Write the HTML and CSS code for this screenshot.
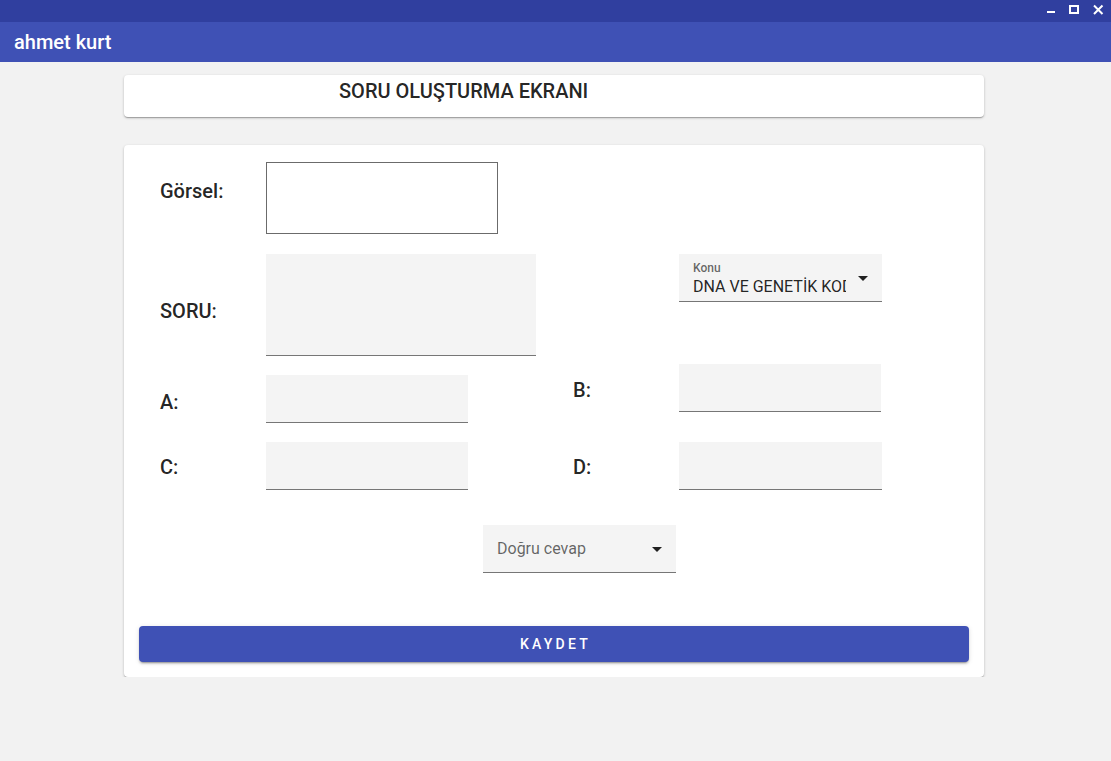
FILE: index.html
```html
<!DOCTYPE html>
<html lang="tr">
<head>
<meta charset="utf-8">
<title>Soru Oluşturma</title>
<link rel="stylesheet" href="styles.css">
</head>
<body>
<div class="titlebar">
  <svg class="wc" width="12" height="16" viewBox="0 0 12 16"><rect x="1" y="11" width="8" height="2" fill="#fff"/></svg>
  <svg class="wc" width="14" height="16" viewBox="0 0 14 16"><rect x="2" y="6" width="8" height="7" fill="none" stroke="#fff" stroke-width="2"/></svg>
  <svg class="wc last" width="14" height="16" viewBox="0 0 14 16"><path d="M2 5.5 L10.5 14 M10.5 5.5 L2 14" stroke="#fff" stroke-width="2"/></svg>
</div>
<div class="appbar">ahmet kurt</div>
<div class="main">
  <div class="card card-title">SORU OLUŞTURMA EKRANI</div>
  <div class="card card-form">
    <div class="form">
      <div class="row row1">
        <div class="cell">
          <div class="label lbl-gorsel">Görsel:</div>
          <div class="image-box"></div>
        </div>
      </div>
      <div class="row row2">
        <div class="cell">
          <div class="label lbl-soru">SORU:</div>
          <div class="field textarea"></div>
        </div>
        <div class="cell right">
          <div class="label"></div>
          <div class="field select konu">
            <div class="select-content">
              <div class="select-label">Konu</div>
              <div class="select-value">DNA VE GENETİK KOD</div>
            </div>
            <svg class="arrow" width="24" height="24" viewBox="0 0 24 24"><path d="M7 10l5 5 5-5z" fill="rgba(0,0,0,0.87)"/></svg>
          </div>
        </div>
      </div>
      <div class="row row3">
        <div class="cell">
          <div class="label lbl-a">A:</div>
          <div class="field input field-a"></div>
        </div>
        <div class="cell right">
          <div class="label lbl-b">B:</div>
          <div class="field input"></div>
        </div>
      </div>
      <div class="row row4">
        <div class="cell">
          <div class="label lbl-c">C:</div>
          <div class="field input"></div>
        </div>
        <div class="cell right">
          <div class="label lbl-c">D:</div>
          <div class="field input wide"></div>
        </div>
      </div>
      <div class="row row5">
        <div class="field select cevap">
          <div class="placeholder">Doğru cevap</div>
          <svg class="arrow" width="24" height="24" viewBox="0 0 24 24"><path d="M7 10l5 5 5-5z" fill="rgba(0,0,0,0.87)"/></svg>
        </div>
      </div>
    </div>
    <button class="save">KAYDET</button>
  </div>
</div>
</body>
</html>
```
FILE: styles.css
```css
html, body {
  margin: 0;
  padding: 0;
}
body {
  background: #f2f2f2;
  font-family: Roboto, "Liberation Sans", Arial, sans-serif;
  color: rgba(0, 0, 0, 0.87);
}
.titlebar {
  height: 22px;
  background: #303f9f;
  display: flex;
  justify-content: flex-end;
  align-items: flex-start;
  padding-right: 5px;
}
.wc {
  display: block;
  margin-left: 10px;
}
.appbar {
  height: 40px;
  line-height: 40px;
  background: #3f51b5;
  color: #fff;
  font-size: 20px;
  font-weight: 500;
  padding-left: 14px;
}
.main {
  padding: 13px 0 0 124px;
  width: 860px;
}
.card {
  background: #fff;
  border-radius: 4px;
  box-shadow: 0 1px 3px rgba(0,0,0,0.2), 0 1px 1px rgba(0,0,0,0.14), 0 2px 1px -1px rgba(0,0,0,0.12);
}
.card-title {
  height: 42px;
  box-sizing: border-box;
  padding: 4px 0 0 215px;
  font-size: 20px;
  line-height: 24px;
  font-weight: 500;
}
.card-form {
  margin-top: 28px;
  padding: 17px 15px 15px;
}
.form {
  padding-left: 21px;
}
.row {
  display: flex;
  align-items: flex-start;
}
.cell {
  display: flex;
  align-items: flex-start;
  width: 413px;
}
.cell.right {
  width: auto;
}
.label {
  width: 106px;
  flex-shrink: 0;
  font-size: 20px;
  line-height: 24px;
  font-weight: 500;
}
.lbl-gorsel { margin-top: 17px; }
.lbl-soru { margin-top: 45px; }
.lbl-a { margin-top: 26px; }
.lbl-b { margin-top: 14px; }
.lbl-c { margin-top: 13px; }

.image-box {
  width: 232px;
  height: 72px;
  box-sizing: border-box;
  border: 1px solid #6b6b6b;
}
.field {
  background: #f4f4f4;
  border-bottom: 1px solid #767676;
  box-sizing: border-box;
}
.row2 { margin-top: 20px; }
.row3 { margin-top: 8px; }
.row4 { margin-top: 19px; }
.row5 { margin-top: 35px; }

.textarea {
  width: 270px;
  height: 102px;
}
.input {
  width: 202px;
  height: 48px;
}
.input.wide { width: 203px; }
.field-a { margin-top: 11px; }

.select {
  display: flex;
  align-items: center;
  height: 48px;
  position: relative;
}
.konu {
  width: 203px;
  align-items: flex-start;
}
.select-content {
  padding: 7px 36px 0 12px;
  width: 100%;
  box-sizing: border-box;
  overflow: hidden;
}
.select-label {
  font-size: 12px;
  line-height: 14px;
  font-weight: 500;
  color: rgba(0, 0, 0, 0.6);
  padding-left: 2px;
}
.select-value {
  margin-top: 2px;
  font-size: 16px;
  line-height: 19px;
  white-space: nowrap;
  overflow: hidden;
  padding-left: 2px;
}
.arrow {
  position: absolute;
  right: 7px;
  top: 12px;
}
.cevap {
  margin-left: 323px;
  width: 193px;
}
.placeholder {
  padding-left: 14px;
  font-size: 16px;
  line-height: 19px;
  color: rgba(0, 0, 0, 0.6);
}
.save {
  display: block;
  width: 100%;
  height: 36px;
  margin-top: 53px;
  border: none;
  border-radius: 4px;
  background: #3f51b5;
  color: #fff;
  font-family: Roboto, "Liberation Sans", Arial, sans-serif;
  font-size: 14px;
  font-weight: 500;
  letter-spacing: 3.2px;
  padding: 0 0 0 3px;
  box-shadow: 0 3px 1px -2px rgba(0,0,0,0.2), 0 2px 2px 0 rgba(0,0,0,0.14), 0 1px 5px 0 rgba(0,0,0,0.12);
}
```
